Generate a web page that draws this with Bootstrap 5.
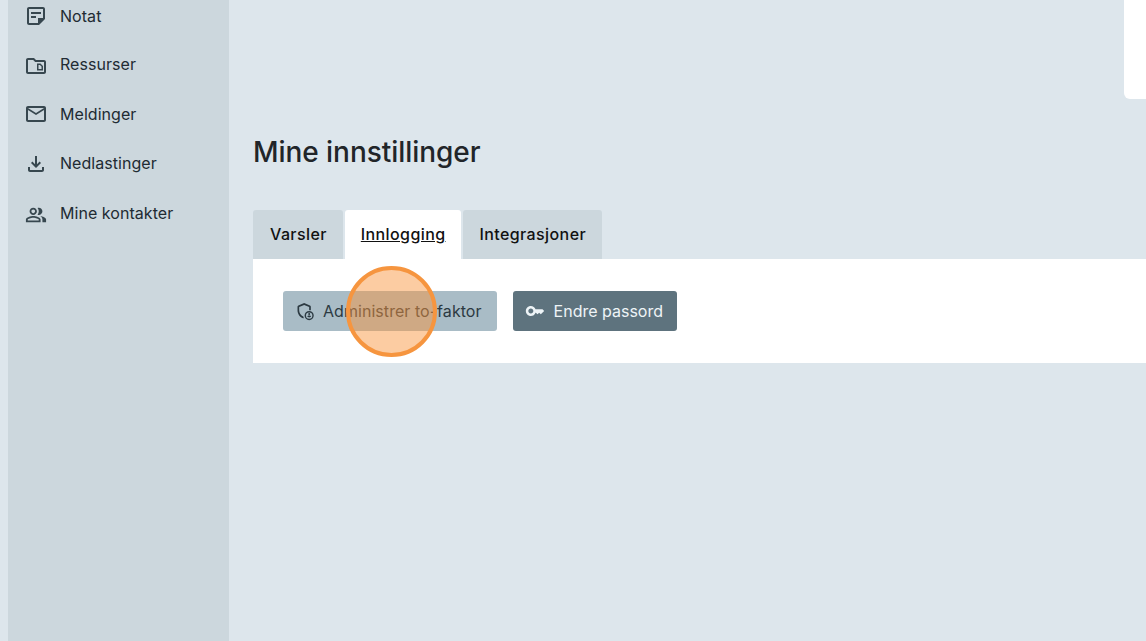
<!DOCTYPE html>
<html lang="no">
<head>
    <meta charset="UTF-8">
    <title>Mine innstillinger</title>
    <meta name="viewport" content="width=device-width, initial-scale=1">
    <link href="https://cdn.jsdelivr.net/npm/bootstrap@5.3.0/dist/css/bootstrap.min.css" rel="stylesheet">
    <style>
        html, body {
            height: 641px;
            overflow: hidden;
        }

        body {
            background: #dde6ec;
            font-family: Inter, "Liberation Sans", sans-serif;
            color: #212529;
        }

        .app-shell {
            height: 641px;
            padding-left: 8px;
        }

        .side-menu {
            width: 221px;
            flex: none;
            background: #ccd7dd;
            padding-left: 16px;
        }

        .side-list {
            margin: -9px 0 0;
        }

        .side-list li:nth-child(2) { margin-top: -1px; }
        .side-list li:nth-child(3) { margin-top: 1px; }
        .side-list li:nth-child(5) { margin-top: 1px; }

        .side-link {
            height: 49px;
            gap: 12px;
            color: #212b33;
            font-size: 16px;
            letter-spacing: .05px;
            text-decoration: none;
        }

        .side-link svg {
            width: 24px;
            height: 24px;
            fill: #37474f;
            flex: none;
        }

        .side-link svg.icon-low { margin-top: 4px; }
        .side-link svg.icon-mid { margin-top: 2px; }

        .side-link svg.icon-people {
            width: 22px;
            height: 22px;
            margin: 4px 1px 0;
        }

        .main-area {
            padding-left: 24px;
            min-width: 0;
        }

        .top-card {
            width: 22px;
            height: 99px;
            background: #fff;
            border-bottom-left-radius: 6px;
        }

        .page-title {
            font-family: Inter, "Liberation Sans", sans-serif;
            font-size: 28px;
            font-weight: 450;
            letter-spacing: -.05px;
            line-height: 34px;
            margin: 36px 0 41px;
        }

        .tab-row {
            gap: 2px;
            border: 0;
        }

        .tab-row .nav-link {
            height: 49px;
            padding: 14px 16px 0;
            background: #ccd7dd;
            color: #111;
            font-size: 16px;
            font-weight: 500;
            letter-spacing: .4px;
            line-height: 20px;
            border: 0;
            border-radius: 3px 3px 0 0;
        }

        .tab-row .nav-item:first-child .nav-link,
        .tab-row .nav-item:last-child .nav-link {
            padding-left: 17px;
        }

        .tab-row .nav-link.active {
            background: #fff;
            color: #111;
            padding-right: 15px;
            text-decoration: underline;
        }

        .tab-body {
            background: #fff;
            height: 104px;
            padding: 32px 30px;
            gap: 16px;
        }

        .action-btn {
            height: 40px;
            padding: 0 15px 0 12px;
            gap: 8px;
            border: 0;
            border-radius: 3px;
            font-size: 16px;
            letter-spacing: .05px;
        }

        .action-btn svg {
            width: 20px;
            height: 20px;
            flex: none;
            fill: currentColor;
        }

        .btn-light-slate, .btn-light-slate:hover {
            background: #a9bcc6;
            color: #2c3a42;
        }

        .btn-dark-slate, .btn-dark-slate:hover {
            background: #5e737e;
            color: #eef4f7;
            gap: 9px;
            padding-right: 14px;
            letter-spacing: 0;
        }

        .click-marker {
            position: absolute;
            left: 346px;
            top: 266px;
            width: 91px;
            height: 91px;
            border-radius: 50%;
            border: 4px solid #f6953f;
            background: rgba(248, 148, 60, .48);
        }
    </style>
</head>
<body>
<div class="app-shell d-flex">
    <nav class="side-menu">
        <ul class="list-unstyled side-list">
            <li><a href="#" class="side-link d-flex align-items-center">
                <svg viewBox="0 0 24 24"><path d="M19 5v9h-5v5H5V5h14m0-2H5c-1.100 0-2 .9-2 2v14c0 1.100.9 2 2 2h10l6-6V5c0-1.100-.9-2-2-2zm-7 11H7v-2h5v2zm5-4H7V8h10v2z"/></svg>
                Notat</a></li>
            <li><a href="#" class="side-link d-flex align-items-center">
                <svg class="icon-low" viewBox="0 0 24 24"><path fill-rule="evenodd" d="M20 6h-8l-2-2H4c-1.100 0-2 .9-2 2v12c0 1.100.9 2 2 2h16c1.100 0 2-.9 2-2V8c0-1.100-.9-2-2-2zm0 12H4V6h5.170l2 2H20v10zM13 9.500v7h6v-4.500l-2.500-2.500H13zm1.500 1.500h1.400l1.600 1.600v2.400h-3v-4z"/></svg>
                Ressurser</a></li>
            <li><a href="#" class="side-link d-flex align-items-center">
                <svg viewBox="0 0 24 24"><path d="M22 6c0-1.100-.9-2-2-2H4c-1.100 0-2 .9-2 2v12c0 1.100.9 2 2 2h16c1.100 0 2-.9 2-2V6zm-2 0l-8 5-8-5h16zm0 12H4V8l8 5 8-5v10z"/></svg>
                Meldinger</a></li>
            <li><a href="#" class="side-link d-flex align-items-center">
                <svg class="icon-mid" viewBox="0 0 24 24"><path d="M18 15v3H6v-3H4v3c0 1.100.9 2 2 2h12c1.100 0 2-.9 2-2v-3h-2zm-1-4l-1.410-1.410L13 12.170V4h-2v8.170L8.410 9.590 7 11l5 5 5-5z"/></svg>
                Nedlastinger</a></li>
            <li><a href="#" class="side-link d-flex align-items-center">
                <svg class="icon-people" viewBox="0 0 24 24"><path d="M16.670 13.130C18.040 14.060 19 15.320 19 17v3h4v-3c0-2.180-3.570-3.470-6.330-3.870zM15 12c2.210 0 4-1.790 4-4s-1.790-4-4-4c-.47 0-.91.1-1.330.24C14.500 5.270 15 6.580 15 8s-.5 2.730-1.330 3.760c.42.140.86.240 1.330.240zM9 12c2.210 0 4-1.790 4-4s-1.790-4-4-4-4 1.790-4 4 1.790 4 4 4zm0-6c1.100 0 2 .9 2 2s-.9 2-2 2-2-.9-2-2 .9-2 2-2zM9 13c-2.670 0-8 1.340-8 4v3h16v-3c0-2.660-5.330-4-8-4zm6 5H3v-.99C3.200 16.290 6.300 15 9 15s5.800 1.290 6 2z"/></svg>
                Mine kontakter</a></li>
        </ul>
    </nav>

    <main class="main-area flex-grow-1">
        <div class="d-flex justify-content-end">
            <div class="top-card"></div>
        </div>
        <h1 class="page-title">Mine innstillinger</h1>

        <ul class="nav tab-row">
            <li class="nav-item"><a class="nav-link" href="#">Varsler</a></li>
            <li class="nav-item"><a class="nav-link active" href="#">Innlogging</a></li>
            <li class="nav-item"><a class="nav-link" href="#">Integrasjoner</a></li>
        </ul>
        <div class="tab-body d-flex align-items-start">
            <button type="button" class="btn action-btn btn-light-slate d-flex align-items-center">
                <svg viewBox="0 0 24 24"><path fill-rule="evenodd" d="M11 2.500l7 2.900c.6.2 1 .8 1 1.400V11h-2V7.200l-6-2.500-6 2.500V11c0 3.300 2 6.300 5 7.700l.6 1.900-.6.2C6.200 19.600 3 15.600 3 11V6.800c0-.6.4-1.200 1-1.400l7-2.900z"/><path fill-rule="evenodd" d="M17 12a5.500 5.500 0 1 1 0 11 5.500 5.500 0 0 1 0-11zm0 1.700a3.800 3.800 0 1 0 0 7.600 3.800 3.800 0 0 0 0-7.600zm0 .8a1.200 1.200 0 1 1 0 2.400 1.200 1.200 0 0 1 0-2.400zm0 3c1 0 2.200.4 2.300 1.200-.5.600-1.300 1-2.300 1s-1.800-.4-2.300-1c.1-.8 1.300-1.200 2.300-1.200z"/></svg>
                Administrer to-faktor
            </button>
            <button type="button" class="btn action-btn btn-dark-slate d-flex align-items-center">
                <svg viewBox="0 0 24 24"><path fill-rule="evenodd" d="M21 10h-8.350C11.830 7.670 9.610 6 7 6c-3.310 0-6 2.690-6 6s2.690 6 6 6c2.610 0 4.830-1.670 5.650-4H13l2 2 2-2 2 2 4-4.040L21 10zM7 15c-1.650 0-3-1.350-3-3s1.350-3 3-3 3 1.350 3 3-1.350 3-3 3z"/></svg>
                Endre passord
            </button>
        </div>
    </main>
</div>
<div class="click-marker"></div>
<script src="https://cdn.jsdelivr.net/npm/bootstrap@5.3.0/dist/js/bootstrap.bundle.min.js"></script>
</body>
</html>
